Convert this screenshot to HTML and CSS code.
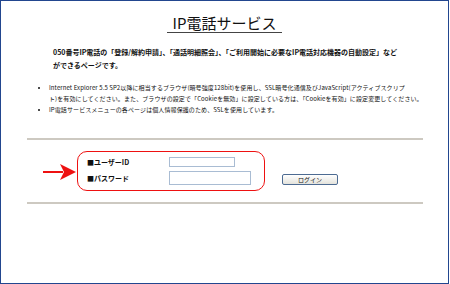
FILE: index.html
```html
<!DOCTYPE html>
<html lang="ja">
<head>
<meta charset="utf-8">
<link rel="stylesheet" href="styles.css">
</head>
<body>
<div class="frame">
  <div class="title-row"><h1 class="title">IP電話サービス</h1></div>
  <div class="content">
    <p class="lead">050番号IP電話の「登録/解約申請」、「通話明細照会」、「ご利用開始に必要なIP電話対応機器の自動設定」など<br>ができるページです。</p>
    <ul class="notes">
      <li>Internet Explorer 5.5 SP2以降に相当するブラウザ(暗号強度128bit)を使用し、SSL暗号化通信及びJavaScript(アクティブスクリプ<br>ト)を有効にしてください。また、ブラウザの設定で「Cookieを無効」に設定している方は、「Cookieを有効」に設定変更してください。</li>
      <li>IP電話サービスメニューの各ページは個人情報保護のため、SSLを使用しています。</li>
    </ul>
    <hr class="rule">
    <div class="login-row">
      <svg class="arrow" width="34" height="18" viewBox="0 0 34 18">
        <rect x="0" y="8" width="20" height="2" fill="#ee1111"/>
        <polygon points="17,1 33,9 17,17 21,9" fill="#ee1111"/>
      </svg>
      <div class="login-box">
        <div class="field">
          <span class="label">■ユーザーID</span>
          <span class="input input-short"></span>
        </div>
        <div class="field">
          <span class="label">■パスワード</span>
          <span class="input input-long"></span>
        </div>
      </div>
      <span class="button">ログイン</span>
    </div>
    <hr class="rule">
  </div>
</div>
</body>
</html>
```
FILE: styles.css
```css
html, body {
  margin: 0;
  padding: 0;
  background: #ffffff;
}
body {
  font-family: "Noto Sans CJK JP", "Noto Sans", sans-serif;
  color: #111111;
}
.frame {
  width: 447px;
  height: 282px;
  border: 1px solid #22468f;
  background: #ffffff;
  overflow: hidden;
}
.title-row {
  display: flex;
  justify-content: center;
  padding-top: 13px;
}
.title {
  margin: 0;
  padding: 0 6px 1px 6px;
  font-size: 15px;
  font-weight: normal;
  line-height: 17px;
  border-bottom: 1px solid #444444;
  color: #111111;
}
.content {
  padding-left: 26px;
  width: 396px;
}
.lead {
  margin: 13px 0 0 26px;
  font-size: 7px;
  font-weight: bold;
  line-height: 13px;
  white-space: nowrap;
}
.notes {
  margin: 10px 0 0 0;
  padding: 0 0 0 22px;
  font-size: 6px;
  line-height: 11px;
  white-space: nowrap;
  list-style: disc;
  letter-spacing: 0.1px;
}
.notes li {
  padding-left: 0;
}
.rule {
  margin: 0;
  border: 0;
  height: 2px;
  background: #cdc9c1;
}
.notes + .rule {
  margin-top: 23px;
}
.login-row {
  display: flex;
  align-items: flex-start;
  padding: 11px 0 11px 0;
}
.arrow {
  margin: 12px 0 0 16px;
  flex: none;
}
.login-box {
  width: 177px;
  height: 38px;
  border: 1px solid #ee1111;
  border-radius: 10px;
  display: flex;
  flex-direction: column;
  justify-content: center;
  gap: 4px;
  padding-left: 9px;
  box-sizing: content-box;
  flex: none;
}
.field {
  display: flex;
  align-items: center;
}
.label {
  width: 82px;
  font-size: 7px;
  font-weight: bold;
  line-height: 10px;
}
.input {
  display: block;
  border: 1px solid #a9bcd3;
  background: #ffffff;
  box-sizing: border-box;
}
.input-short {
  width: 66px;
  height: 10px;
}
.input-long {
  width: 82px;
  height: 14px;
}
.button {
  margin: 23px 0 0 17px;
  width: 56px;
  height: 11px;
  box-sizing: border-box;
  border: 1px solid #4d6b92;
  border-radius: 2px;
  background: linear-gradient(#ffffff, #e4e3dc);
  font-size: 6px;
  line-height: 9px;
  text-align: center;
  color: #111111;
  flex: none;
}
```
